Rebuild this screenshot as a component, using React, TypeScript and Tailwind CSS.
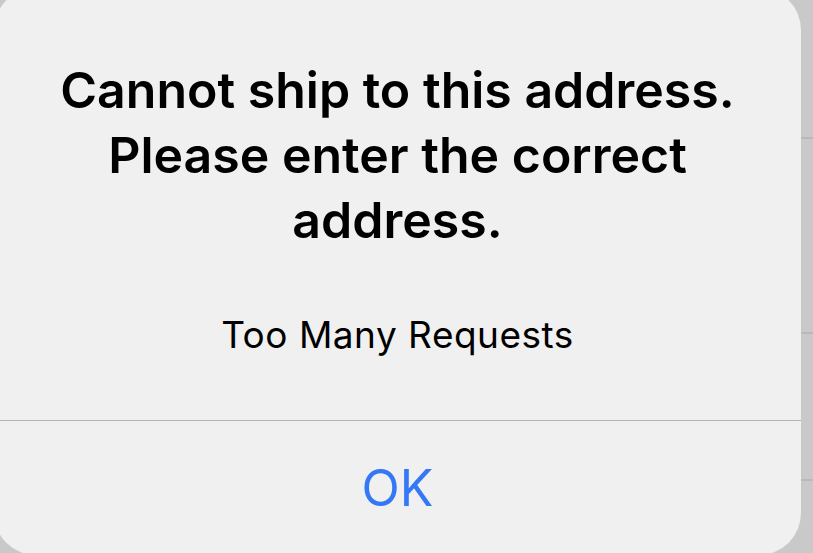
import React from "react";

export default function App() {
  const font = { fontFamily: "Inter, 'Noto Sans', sans-serif" };
  return (
    <div className="relative w-[813px] h-[553px] overflow-hidden bg-[#c9c9c9]" style={font}>
      {/* background list behind the alert */}
      <div className="absolute inset-0 flex flex-col">
        <div className="h-[139px] border-b-2 border-[#b9b9b9]" />
        <div className="h-[195px] border-b-2 border-[#b9b9b9]" />
        <div className="h-[147px] border-b-2 border-[#b9b9b9]" />
      </div>
      {/* alert */}
      <div className="absolute left-[-6px] top-[-12px] w-[807px] h-[567px] rounded-[42px] bg-[#f0f0f0] flex flex-col">
        <div className="pt-[70px] flex flex-col items-center">
          <div className="text-[50px] leading-[65px] font-semibold text-black text-center">
            <div>Cannot ship to this address.</div>
            <div>Please enter the correct</div>
            <div>address.</div>
          </div>
          <div className="mt-[60px] text-[37px] leading-[44px] text-black text-center tracking-[0.5px]">
            Too Many Requests
          </div>
        </div>
        <div className="mt-[63px] h-px bg-[#b4b4b4]" />
        <div className="flex-1 flex items-center justify-center">
          <div className="text-[50px] leading-[60px] text-[#3478f6]">OK</div>
        </div>
      </div>
    </div>
  );
}
